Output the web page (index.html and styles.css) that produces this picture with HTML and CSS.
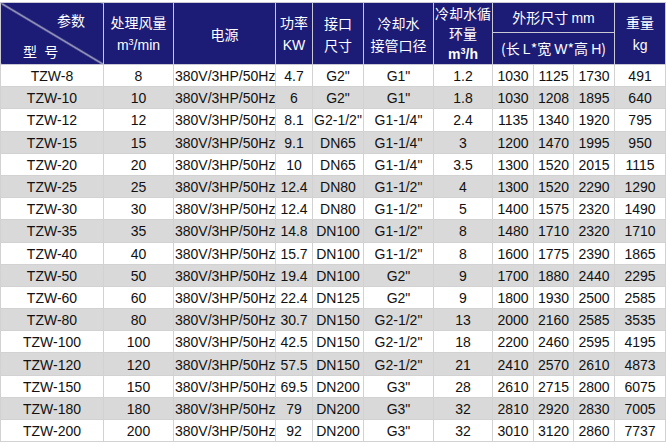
FILE: index.html
```html
<!DOCTYPE html>
<html lang="zh">
<head>
<meta charset="utf-8">
<link rel="stylesheet" href="styles.css">
</head>
<body>
<table class="spec">
  <colgroup>
    <col class="c1"><col class="c2"><col class="c3"><col class="c4"><col class="c5"><col class="c6"><col class="c7"><col class="c8"><col class="c9"><col class="c10"><col class="c11">
  </colgroup>
  <thead>
    <tr class="h1">
      <th rowspan="2" class="diag">
        <div class="diag-box"><span class="d-top">参数</span><span class="d-bot">型 号</span></div>
      </th>
      <th rowspan="2">处理风量<br><span class="unit">m<sup>3</sup>/min</span></th>
      <th rowspan="2">电源</th>
      <th rowspan="2">功率<br><span class="unit">KW</span></th>
      <th rowspan="2">接口<br>尺寸</th>
      <th rowspan="2">冷却水<br>接管口径</th>
      <th rowspan="2" class="tight">冷却水循<br>环量<br><span class="unit bold">m<sup>3</sup>/h</span></th>
      <th colspan="3">外形尺寸 <span class="unit">mm</span></th>
      <th rowspan="2">重量<br><span class="unit">kg</span></th>
    </tr>
    <tr class="h2">
      <th colspan="3" class="sub">(长 <span class="unit">L</span>*宽 <span class="unit">W</span>*高 <span class="unit">H</span>)</th>
    </tr>
  </thead>
  <tbody>
    <tr><td>TZW-8</td><td>8</td><td class="left">380V/3HP/50Hz</td><td>4.7</td><td>G2"</td><td>G1"</td><td>1.2</td><td>1030</td><td>1125</td><td>1730</td><td>491</td></tr>
    <tr class="alt"><td>TZW-10</td><td>10</td><td class="left">380V/3HP/50Hz</td><td>6</td><td>G2"</td><td>G1"</td><td>1.8</td><td>1030</td><td>1208</td><td>1895</td><td>640</td></tr>
    <tr><td>TZW-12</td><td>12</td><td class="left">380V/3HP/50Hz</td><td>8.1</td><td>G2-1/2"</td><td>G1-1/4"</td><td>2.4</td><td>1135</td><td>1340</td><td>1920</td><td>795</td></tr>
    <tr class="alt"><td>TZW-15</td><td>15</td><td class="left">380V/3HP/50Hz</td><td>9.1</td><td>DN65</td><td>G1-1/4"</td><td>3</td><td>1200</td><td>1470</td><td>1995</td><td>950</td></tr>
    <tr><td>TZW-20</td><td>20</td><td class="left">380V/3HP/50Hz</td><td>10</td><td>DN65</td><td>G1-1/4"</td><td>3.5</td><td>1300</td><td>1520</td><td>2015</td><td>1115</td></tr>
    <tr class="alt"><td>TZW-25</td><td>25</td><td class="left">380V/3HP/50Hz</td><td>12.4</td><td>DN80</td><td>G1-1/2"</td><td>4</td><td>1300</td><td>1520</td><td>2290</td><td>1290</td></tr>
    <tr><td>TZW-30</td><td>30</td><td class="left">380V/3HP/50Hz</td><td>12.4</td><td>DN80</td><td>G1-1/2"</td><td>5</td><td>1400</td><td>1575</td><td>2320</td><td>1490</td></tr>
    <tr class="alt"><td>TZW-35</td><td>35</td><td class="left">380V/3HP/50Hz</td><td>14.8</td><td>DN100</td><td>G1-1/2"</td><td>8</td><td>1480</td><td>1710</td><td>2320</td><td>1710</td></tr>
    <tr><td>TZW-40</td><td>40</td><td class="left">380V/3HP/50Hz</td><td>15.7</td><td>DN100</td><td>G1-1/2"</td><td>8</td><td>1600</td><td>1775</td><td>2390</td><td>1865</td></tr>
    <tr class="alt"><td>TZW-50</td><td>50</td><td class="left">380V/3HP/50Hz</td><td>19.4</td><td>DN100</td><td>G2"</td><td>9</td><td>1700</td><td>1880</td><td>2440</td><td>2295</td></tr>
    <tr><td>TZW-60</td><td>60</td><td class="left">380V/3HP/50Hz</td><td>22.4</td><td>DN125</td><td>G2"</td><td>9</td><td>1800</td><td>1930</td><td>2500</td><td>2585</td></tr>
    <tr class="alt"><td>TZW-80</td><td>80</td><td class="left">380V/3HP/50Hz</td><td>30.7</td><td>DN150</td><td>G2-1/2"</td><td>13</td><td>2000</td><td>2160</td><td>2585</td><td>3535</td></tr>
    <tr><td>TZW-100</td><td>100</td><td class="left">380V/3HP/50Hz</td><td>42.5</td><td>DN150</td><td>G2-1/2"</td><td>18</td><td>2200</td><td>2460</td><td>2595</td><td>4195</td></tr>
    <tr class="alt"><td>TZW-120</td><td>120</td><td class="left">380V/3HP/50Hz</td><td>57.5</td><td>DN150</td><td>G2-1/2"</td><td>21</td><td>2410</td><td>2570</td><td>2610</td><td>4873</td></tr>
    <tr><td>TZW-150</td><td>150</td><td class="left">380V/3HP/50Hz</td><td>69.5</td><td>DN200</td><td>G3"</td><td>28</td><td>2610</td><td>2715</td><td>2800</td><td>6075</td></tr>
    <tr class="alt"><td>TZW-180</td><td>180</td><td class="left">380V/3HP/50Hz</td><td>79</td><td>DN200</td><td>G3"</td><td>32</td><td>2810</td><td>2920</td><td>2830</td><td>7005</td></tr>
    <tr><td>TZW-200</td><td>200</td><td class="left">380V/3HP/50Hz</td><td>92</td><td>DN200</td><td>G3"</td><td>32</td><td>3010</td><td>3120</td><td>2860</td><td>7737</td></tr>
  </tbody>
</table>
</body>
</html>
```
FILE: styles.css
```css
html, body {
  margin: 0;
  padding: 0;
  background: #ffffff;
}
body {
  padding-top: 2px;
}
.spec {
  border-collapse: collapse;
  table-layout: fixed;
  width: 665px;
  font-family: "Liberation Sans", Arial, "Noto Sans CJK SC", sans-serif;
  font-size: 14px;
  color: #111111;
}
.c1 { width: 103px; }
.c2 { width: 70px; }
.c3 { width: 102px; }
.c4 { width: 37px; }
.c5 { width: 51px; }
.c6 { width: 70px; }
.c7 { width: 59px; }
.c8 { width: 41px; }
.c9 { width: 40px; }
.c10 { width: 41px; }
.c11 { width: 51px; }

.spec th {
  background: #1c1b76;
  color: #ffffff;
  font-family: "Noto Sans CJK SC", "Liberation Sans", sans-serif;
  font-weight: 400;
  font-size: 14px;
  line-height: 22px;
  border: 1px solid #c9c9d4;
  padding: 0;
  text-align: center;
  vertical-align: middle;
}
.spec .h1 { height: 30px; }
.spec .h2 { height: 31px; }
.spec th.tight {
  line-height: 20px;
  white-space: nowrap;
  overflow: hidden;
}
.spec th.sub { line-height: 29px; }
.unit {
  font-family: "Liberation Sans", Arial, sans-serif;
  font-size: 14px;
}
.unit sup {
  font-size: 9px;
  line-height: 0;
  vertical-align: 5px;
}
.bold { font-weight: 700; }

.spec th.diag {
  background: #1c1b76 linear-gradient(to top right, transparent calc(50% - 1px), #aeb0c8 calc(50% - 0.5px), #aeb0c8 calc(50% + 0.5px), transparent calc(50% + 1px));
}
.diag-box {
  display: flex;
  flex-direction: column;
  justify-content: space-between;
  height: 60px;
  box-sizing: border-box;
  padding: 4px 18px 0 22px;
}
.d-top { align-self: flex-end; line-height: 24px; }
.d-bot { align-self: flex-start; line-height: 26px; word-spacing: 4px; }

.spec td {
  height: 20.2px;
  padding: 1px 0 0 0;
  border: 1px solid #d2d2d2;
  text-align: center;
  vertical-align: middle;
  white-space: nowrap;
  line-height: 20px;
}
.spec td.left { text-align: left; padding-left: 1px; }
.spec tr.alt td { background: #d9d9d9; }
```
